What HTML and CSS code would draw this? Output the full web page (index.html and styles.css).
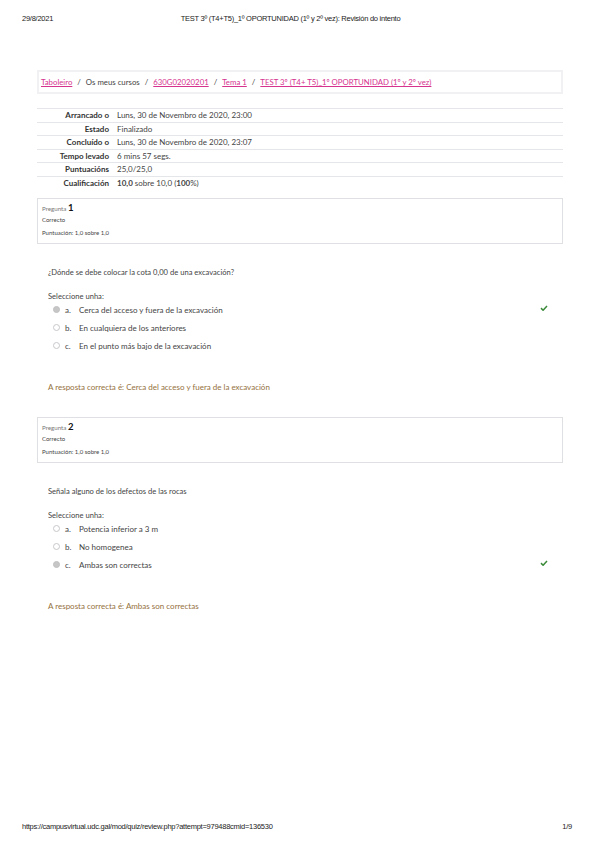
FILE: index.html
```html
<!DOCTYPE html>
<html lang="gl">
<head>
<meta charset="utf-8">
<title>Revisión do intento</title>
<link rel="stylesheet" href="styles.css">
</head>
<body>
<div class="page">
  <header class="print-head">
    <span class="ph-date">29/8/2021</span>
    <span class="ph-title">TEST 3º (T4+T5)_1º OPORTUNIDAD (1º y 2º vez): Revisión do intento</span>
    <span></span>
  </header>

  <main class="content">
    <nav class="crumbs">
      <a href="#">Taboleiro</a><span class="sep">/</span><span>Os meus cursos</span><span class="sep">/</span><a href="#">630G02020201</a><span class="sep">/</span><a href="#">Tema 1</a><span class="sep">/</span><a href="#">TEST 3º (T4+ T5)_1º OPORTUNIDAD (1º y 2º vez)</a>
    </nav>

    <table class="summary">
      <tr><th>Arrancado o</th><td>Luns, 30 de Novembro de 2020, 23:00</td></tr>
      <tr><th>Estado</th><td>Finalizado</td></tr>
      <tr><th>Concluído o</th><td>Luns, 30 de Novembro de 2020, 23:07</td></tr>
      <tr><th>Tempo levado</th><td>6 mins 57 segs.</td></tr>
      <tr><th>Puntuacións</th><td>25,0/25,0</td></tr>
      <tr><th>Cualificación</th><td><b>10,0</b> sobre 10,0 (<b>100</b>%)</td></tr>
    </table>

    <section class="que">
      <div class="info">
        <div class="qno"><span class="qlabel">Pregunta</span> <b>1</b></div>
        <div class="state">Correcto</div>
        <div class="grade">Puntuación: 1,0 sobre 1,0</div>
      </div>
      <div class="formulation">
        <p class="qtext">¿Dónde se debe colocar la cota 0,00 de una excavación?</p>
        <p class="prompt">Seleccione unha:</p>
        <div class="answers">
          <div class="opt"><span class="radio on"></span><span class="letter">a.</span><span class="otext">Cerca del acceso y fuera de la excavación</span><svg class="tick" viewBox="0 0 10 8"><path d="M1 4.2 L3.8 7 L9 1.4" fill="none" stroke="#3a8a3a" stroke-width="2"/></svg></div>
          <div class="opt"><span class="radio"></span><span class="letter">b.</span><span class="otext">En cualquiera de los anteriores</span></div>
          <div class="opt"><span class="radio"></span><span class="letter">c.</span><span class="otext">En el punto más bajo de la excavación</span></div>
        </div>
      </div>
      <p class="feedback">A resposta correcta é: Cerca del acceso y  fuera de la excavación</p>
    </section>

    <section class="que que2">
      <div class="info">
        <div class="qno"><span class="qlabel">Pregunta</span> <b>2</b></div>
        <div class="state">Correcto</div>
        <div class="grade">Puntuación: 1,0 sobre 1,0</div>
      </div>
      <div class="formulation">
        <p class="qtext">Señala alguno de los defectos de las rocas</p>
        <p class="prompt">Seleccione unha:</p>
        <div class="answers">
          <div class="opt"><span class="radio"></span><span class="letter">a.</span><span class="otext">Potencia inferior a 3 m</span></div>
          <div class="opt"><span class="radio"></span><span class="letter">b.</span><span class="otext">No homogenea</span></div>
          <div class="opt"><span class="radio on"></span><span class="letter">c.</span><span class="otext">Ambas son correctas</span><svg class="tick" viewBox="0 0 10 8"><path d="M1 4.2 L3.8 7 L9 1.4" fill="none" stroke="#3a8a3a" stroke-width="2"/></svg></div>
        </div>
      </div>
      <p class="feedback">A resposta correcta é: Ambas son correctas</p>
    </section>
  </main>

  <footer class="print-foot">
    <span>https://campusvirtual.udc.gal/mod/quiz/review.php?attempt=979488cmid=136530</span>
    <span>1/9</span>
  </footer>
</div>
</body>
</html>
```

FILE: styles.css
```css
html, body {
  margin: 0;
  padding: 0;
  background: #fff;
}
.page {
  width: 599px;
  height: 848px;
  position: relative;
  font-family: Lato, "Open Sans", sans-serif;
  color: #333;
}
.print-head {
  display: grid;
  grid-template-columns: 1fr auto 1fr;
  padding: 14px 40px 0 22px;
  height: 20px;
  font-family: "Liberation Sans", Arial, sans-serif;
  font-size: 7.5px;
  color: #222;
  letter-spacing: -0.25px;
}
.ph-title { text-align: center; }

.content {
  margin: 36px 36px 0 37px;
  width: 526px;
}

.crumbs {
  border: 2px solid #f1f1f3;
  height: 20px;
  box-sizing: content-box;
  display: flex;
  align-items: center;
  padding: 0 0 0 2px;
  font-size: 7.8px;
  color: #444;
}
.crumbs a {
  color: #d6338f;
  text-decoration: underline;
}
.crumbs .sep { margin: 0 5px; color: #444; }

.summary {
  margin-top: 14px;
  width: 100%;
  border-collapse: collapse;
  font-size: 8px;
}
.summary tr {
  border-top: 1px solid #e4e6ea;
  height: 13.5px;
}
.summary th {
  width: 72px;
  text-align: right;
  font-weight: bold;
  padding: 0 4px 0 0;
  color: #333;
  white-space: nowrap;
}
.summary td {
  padding: 0 0 0 4px;
  color: #444;
}

.que { margin-top: 8px; }
.que2 { margin-top: 25px; }
.info {
  border: 1px solid #dee0e4;
  height: 46px;
  padding: 4px 0 0 4px;
  box-sizing: border-box;
  font-size: 6px;
  color: #444;
}
.qno { height: 11px; line-height: 10px; }
.qlabel { color: #777; font-size: 6.2px; }
.qno b { font-size: 9.5px; color: #111; }
.state { margin-top: 2px; }
.grade { margin-top: 6px; }

.formulation {
  padding-left: 11px;
  font-size: 7.6px;
  color: #444;
}
.qtext { margin: 23px 0 0; height: 10px; line-height: 10px; }
.prompt { margin: 14px 0 0; height: 10px; line-height: 10px; }
.answers { margin-top: 0; padding-left: 5px; font-size: 8px; }
.opt {
  display: flex;
  align-items: center;
  height: 18px;
  position: relative;
}
.radio {
  width: 5px;
  height: 5px;
  border: 1px solid #c7c8cc;
  border-radius: 50%;
  margin-right: 5px;
  background: #fff;
}
.radio.on { background: #c6c6c6; border-color: #c0c0c0; }
.letter { width: 14px; }
.tick {
  position: absolute;
  left: 487px;
  top: 4px;
  width: 8px;
  height: 6px;
}
.feedback {
  margin: 27px 0 0 11px;
  font-size: 8px;
  color: #94703d;
}

.print-foot {
  position: absolute;
  left: 22px;
  right: 27px;
  top: 822px;
  display: flex;
  justify-content: space-between;
  font-family: "Liberation Sans", Arial, sans-serif;
  font-size: 7.5px;
  letter-spacing: -0.25px;
  color: #222;
}
```
